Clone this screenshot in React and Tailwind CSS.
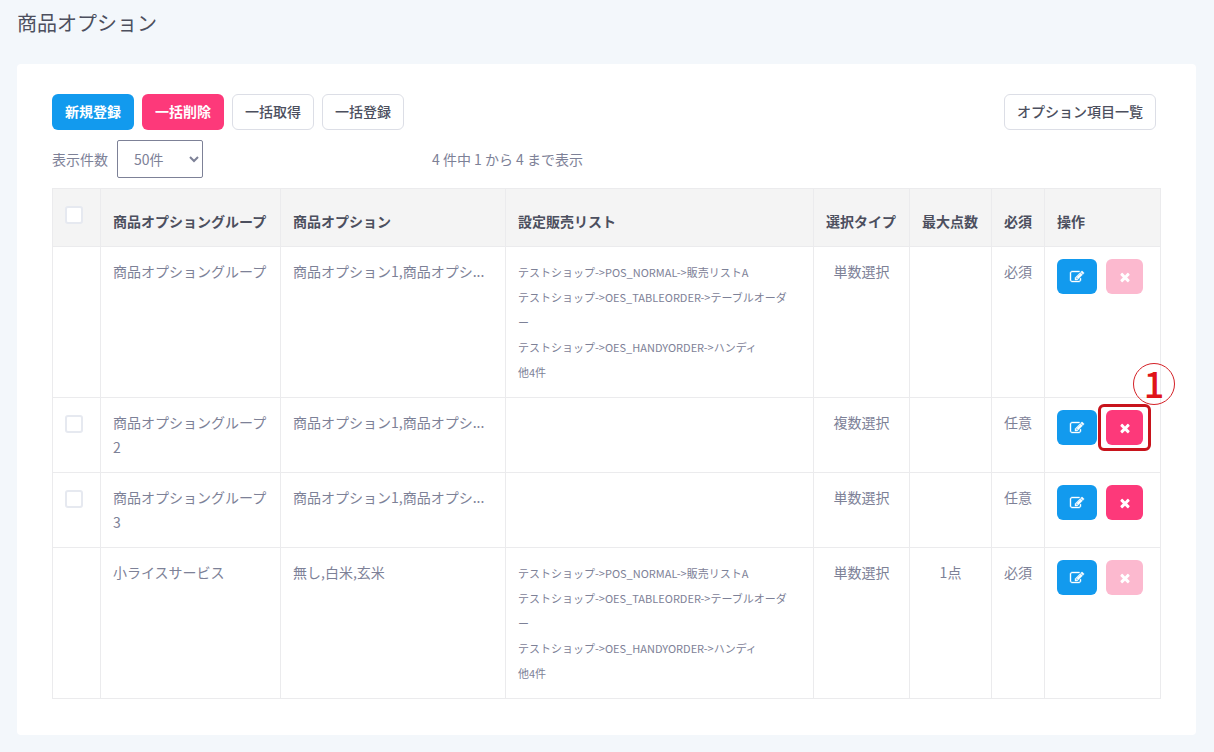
const EDIT_PATH =
  "M888 1184l116-116-152-152-116 116v56h96v96h56zm440-720q-16-16-33 1l-350 350q-17 17-1 33t33-1l350-350q17-17 1-33zm80 594v190q0 119-84.5 203.5t-203.5 84.5h-832q-119 0-203.5-84.5t-84.5-203.5v-832q0-119 84.5-203.5t203.5-84.5h832q63 0 117 25 15 7 18 23 3 17-9 29l-49 49q-14 14-32 8-23-6-45-6h-832q-66 0-113 47t-47 113v832q0 66 47 113t113 47h832q66 0 113-47t47-113v-126q0-13 9-22l64-64q15-15 35-7t20 29zm-96-738l288 288-672 672h-288v-288zm444 132l-92 92-288-288 92-92q28-28 68-28t68 28l152 152q28 28 28 68t-28 68z";
const TIMES_PATH =
  "M1490 1322q0 40-28 68l-136 136q-28 28-68 28t-68-28l-294-294-294 294q-28 28-68 28t-68-28l-136-136q-28-28-28-68t28-68l294-294-294-294q-28-28-28-68t28-68l136-136q28-28 68-28t68 28l294 294 294-294q28-28 68-28t68 28l136 136q28 28 28 68t-28 68l-294 294 294 294q28 28 28 68z";

const SALES_LISTS = [
  "テストショップ->POS_NORMAL->販売リストA",
  "テストショップ->OES_TABLEORDER->テーブルオーダー",
  "テストショップ->OES_HANDYORDER->ハンディ",
  "他4件",
];

const ROWS = [
  { group: "商品オプショングループ", options: "商品オプション1,商品オプシ...", lists: SALES_LISTS, type: "単数選択", max: "", required: "必須", locked: true },
  { group: "商品オプショングループ2", options: "商品オプション1,商品オプシ...", lists: [], type: "複数選択", max: "", required: "任意", mark: "1" },
  { group: "商品オプショングループ3", options: "商品オプション1,商品オプシ...", lists: [], type: "単数選択", max: "", required: "任意" },
  { group: "小ライスサービス", options: "無し,白米,玄米", lists: SALES_LISTS, type: "単数選択", max: "1点", required: "必須", locked: true },
];

function Checkbox({ label }) {
  return (
    <input
      type="checkbox"
      aria-label={label}
      className="mt-[5px] block size-[18px] appearance-none rounded-[3px] border-2 border-[#e6e9f0] bg-white checked:bg-[#129aee]"
    />
  );
}

function OutlineButton({ children }) {
  return (
    <button type="button" className="h-9 rounded-md border border-[#dcdee6] bg-white px-3 pb-0.5 font-medium text-[#4c4f5e]">
      {children}
    </button>
  );
}

function Callout({ number }) {
  return (
    <>
      <span className="pointer-events-none absolute -inset-x-2 -inset-y-[6px] rounded-md border-3 border-[#c8141c]" />
      <span className="pointer-events-none absolute -top-[47px] left-[27px] flex size-[42px] items-center justify-center rounded-full border border-[#d42026] pb-[5px] text-4xl leading-none font-medium text-[#e01519]">
        {number}
      </span>
    </>
  );
}

function RowActions({ row }) {
  return (
    <div className="flex gap-[9px]">
      <button type="button" aria-label="編集" className="flex h-[35px] w-10 items-center justify-center rounded-md bg-[#129aee] text-white">
        <svg viewBox="0 0 1792 1792" className="size-[14px] overflow-visible" fill="currentColor" stroke="currentColor" strokeWidth="50">
          <path d={EDIT_PATH} />
        </svg>
      </button>
      <div className="relative">
        <button
          type="button"
          aria-label="削除"
          disabled={row.locked}
          className="flex h-[35px] w-[37px] items-center justify-center rounded-md bg-[#fd397a] pt-px text-white disabled:bg-[#fcb9cf]"
        >
          <svg viewBox="0 0 1792 1792" className="size-[14px]" fill="currentColor">
            <path d={TIMES_PATH} />
          </svg>
        </button>
        {row.mark && <Callout number={row.mark} />}
      </div>
    </div>
  );
}

const TH = "border border-[#ebebed] px-3 pt-3 pb-3 align-bottom font-bold";
const TD = "border border-[#ebebed] px-3 pt-3 pb-3 align-top";

export default function App() {
  return (
    <div className="min-h-screen bg-[#f3f7fb] px-[17px] pt-2 pb-4 font-['Noto_Sans_CJK_JP','Noto_Sans',sans-serif] text-sm text-[#7d8197]">
      <h1 className="text-xl leading-[30px] text-[#4c4f5e]">商品オプション</h1>

      <main className="mt-[26px] mr-px rounded bg-white px-[35px] pt-[30px] pb-9">
        <div className="flex items-center gap-2">
          <button type="button" className="h-9 rounded-md bg-[#129aee] px-[13px] pb-0.5 font-bold text-white">
            新規登録
          </button>
          <button type="button" className="h-9 rounded-md bg-[#fd397a] px-[13px] pb-0.5 font-bold text-white">
            一括削除
          </button>
          <OutlineButton>一括取得</OutlineButton>
          <OutlineButton>一括登録</OutlineButton>
          <div className="mr-[5px] ml-auto">
            <OutlineButton>オプション項目一覧</OutlineButton>
          </div>
        </div>

        <div className="mt-[10px] mb-[10px] grid grid-cols-[380px_1fr] items-center">
          <div className="flex items-center gap-[9px]">
            <label htmlFor="page-size">表示件数</label>
            <select
              id="page-size"
              defaultValue="50"
              className="h-[38px] w-[86px] rounded-xs border border-[#7d8197] bg-white pl-3"
            >
              <option value="10">10件</option>
              <option value="50">50件</option>
              <option value="100">100件</option>
            </select>
          </div>
          <p>4 件中 1 から 4 まで表示</p>
        </div>

        <table className="w-full table-fixed border-collapse leading-[25px]">
          <colgroup>
            <col className="w-12" />
            <col className="w-[180px]" />
            <col className="w-[225px]" />
            <col />
            <col className="w-24" />
            <col className="w-[82px]" />
            <col className="w-[53px]" />
            <col className="w-[116px]" />
          </colgroup>
          <thead>
            <tr className="h-[58px] bg-[#f4f4f4] text-left text-[#4c4f5e]">
              <th className="border border-[#ebebed] px-3 pt-3 pb-3 align-top">
                <Checkbox label="すべて選択" />
              </th>
              <th className={TH}>商品オプショングループ</th>
              <th className={TH}>商品オプション</th>
              <th className={TH}>設定販売リスト</th>
              <th className={TH + " whitespace-nowrap"}>選択タイプ</th>
              <th className={TH + " whitespace-nowrap"}>最大点数</th>
              <th className={TH + " whitespace-nowrap"}>必須</th>
              <th className={TH}>操作</th>
            </tr>
          </thead>
          <tbody>
            {ROWS.map((row) => (
              <tr key={row.group}>
                <td className={TD}>{!row.locked && <Checkbox label={row.group} />}</td>
                <td className={TD + " break-all"}>{row.group}</td>
                <td className={TD + " whitespace-nowrap"}>{row.options}</td>
                <td className="border border-[#ebebed] pt-[13px] pr-5 pb-3 pl-3 align-top">
                  {row.lists.map((line) => (
                    <div key={line} className="text-[11px] leading-[25px] break-all">
                      {line}
                    </div>
                  ))}
                </td>
                <td className={TD + " text-center"}>{row.type}</td>
                <td className={TD + " text-center"}>{row.max}</td>
                <td className={TD + " text-center"}>{row.required}</td>
                <td className={TD}>
                  <RowActions row={row} />
                </td>
              </tr>
            ))}
          </tbody>
        </table>
      </main>
    </div>
  );
}
